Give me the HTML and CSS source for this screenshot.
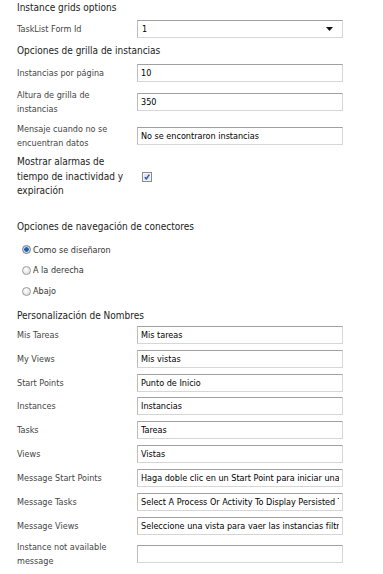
FILE: index.html
```html
<!DOCTYPE html>
<html lang="es">
<head>
    <meta charset="UTF-8">
    <title>Opciones</title>
    <meta name="viewport" content="width=device-width, initial-scale=1.0">
    <link rel="stylesheet" href="styles.css">
</head>
<body>
    <div class="panel">
        <h3 class="section first">Instance grids options</h3>
        <div class="row">
            <label>TaskList Form Id</label>
            <div class="select">
                <span>1</span>
                <svg class="arrow" width="7" height="4" viewBox="0 0 7 4"><path d="M0 0h7L3.5 4z" fill="#111"/></svg>
            </div>
        </div>

        <h3 class="section">Opciones de grilla de instancias</h3>
        <div class="row">
            <label>Instancias por página</label>
            <input type="text" value="10">
        </div>
        <div class="row">
            <label>Altura de grilla de instancias</label>
            <input type="text" value="350">
        </div>
        <div class="row">
            <label>Mensaje cuando no se encuentran datos</label>
            <input type="text" value="No se encontraron instancias">
        </div>
        <div class="row">
            <label class="big">Mostrar alarmas de tiempo de inactividad y expiración</label>
            <span class="check">
                <svg width="10" height="10" viewBox="0 0 10 10">
                    <rect x="0.5" y="0.5" width="9" height="9" fill="#f4f4f4" stroke="#8a8a8a"/>
                    <rect x="2" y="2" width="6" height="6" fill="#dfe6ee"/>
                    <path d="M2.8 5.2l1.5 1.6L7.3 2.6" fill="none" stroke="#2a56b0" stroke-width="1.4"/>
                </svg>
            </span>
        </div>

        <h3 class="section spaced">Opciones de navegación de conectores</h3>
        <div class="radios">
            <div class="radio"><span class="dot on"></span>Como se diseñaron</div>
            <div class="radio"><span class="dot"></span>A la derecha</div>
            <div class="radio"><span class="dot"></span>Abajo</div>
        </div>

        <h3 class="section names">Personalización de Nombres</h3>
        <div class="row">
            <label>Mis Tareas</label>
            <input type="text" value="Mis tareas">
        </div>
        <div class="row">
            <label>My Views</label>
            <input type="text" value="Mis vistas">
        </div>
        <div class="row">
            <label>Start Points</label>
            <input type="text" value="Punto de Inicio">
        </div>
        <div class="row">
            <label>Instances</label>
            <input type="text" value="Instancias">
        </div>
        <div class="row">
            <label>Tasks</label>
            <input type="text" value="Tareas">
        </div>
        <div class="row">
            <label>Views</label>
            <input type="text" value="Vistas">
        </div>
        <div class="row">
            <label>Message Start Points</label>
            <input type="text" value="Haga doble clic en un Start Point para iniciar una instancia">
        </div>
        <div class="row">
            <label>Message Tasks</label>
            <input type="text" value="Select A Process Or Activity To Display Persisted Tasks">
        </div>
        <div class="row">
            <label>Message Views</label>
            <input type="text" value="Seleccione una vista para vaer las instancias filtradas">
        </div>
        <div class="row">
            <label>Instance not available message</label>
            <input type="text" value="">
        </div>
    </div>
</body>
</html>
```

FILE: styles.css
```css
body {
    margin: 0;
    padding: 0;
    background: #fff;
    font-family: "DejaVu Sans Condensed", "DejaVu Sans", sans-serif;
    font-size: 9px;
    color: #444;
}
.panel {
    padding: 1px 0 0 17px;
    width: 326px;
}
.section {
    margin: 4px 0 6px 0;
    font-size: 10px;
    font-weight: normal;
    line-height: 14px;
    color: #222;
}
.section.first {
    margin-top: 0;
    margin-bottom: 5px;
}
.section.spaced {
    margin-top: 21px;
    margin-bottom: 5px;
}
.section.names {
    margin-top: 7px;
    margin-bottom: 3px;
}
.row {
    display: grid;
    grid-template-columns: 120px 206px;
    align-items: center;
    margin-bottom: 5.85px;
}
.row label {
    line-height: 14px;
    padding-right: 8px;
}
.row label.big {
    font-size: 10px;
    line-height: 14.5px;
    color: #222;
}
input[type="text"], .select {
    box-sizing: border-box;
    height: 18px;
    width: 206px;
    margin: 0;
    padding: 0 3px;
    border: 1px solid #d6d6d6;
    border-top-color: #a0a0a0;
    border-left-color: #bcbcbc;
    font-family: inherit;
    font-size: 9px;
    color: #000;
    background: #fff;
    outline: none;
}
.select {
    display: flex;
    align-items: center;
    justify-content: space-between;
    padding: 0 9px 0 4px;
}
.check {
    display: flex;
    padding-left: 5px;
}
.radios {
    padding-left: 5px;
    margin-top: 6px;
}
.radio {
    display: flex;
    align-items: center;
    height: 20px;
    color: #333;
}
.radio + .radio {
    height: 21px;
}
.dot {
    box-sizing: border-box;
    width: 9px;
    height: 9px;
    border-radius: 50%;
    border: 1px solid #9a9a9a;
    background: radial-gradient(circle at 40% 35%, #fff, #d8d8d8);
    margin-right: 2px;
}
.dot.on {
    background: radial-gradient(circle, #1f5fb0 0 2px, #cfd9e6 2.5px);
    border-color: #7a7a7a;
}
```
